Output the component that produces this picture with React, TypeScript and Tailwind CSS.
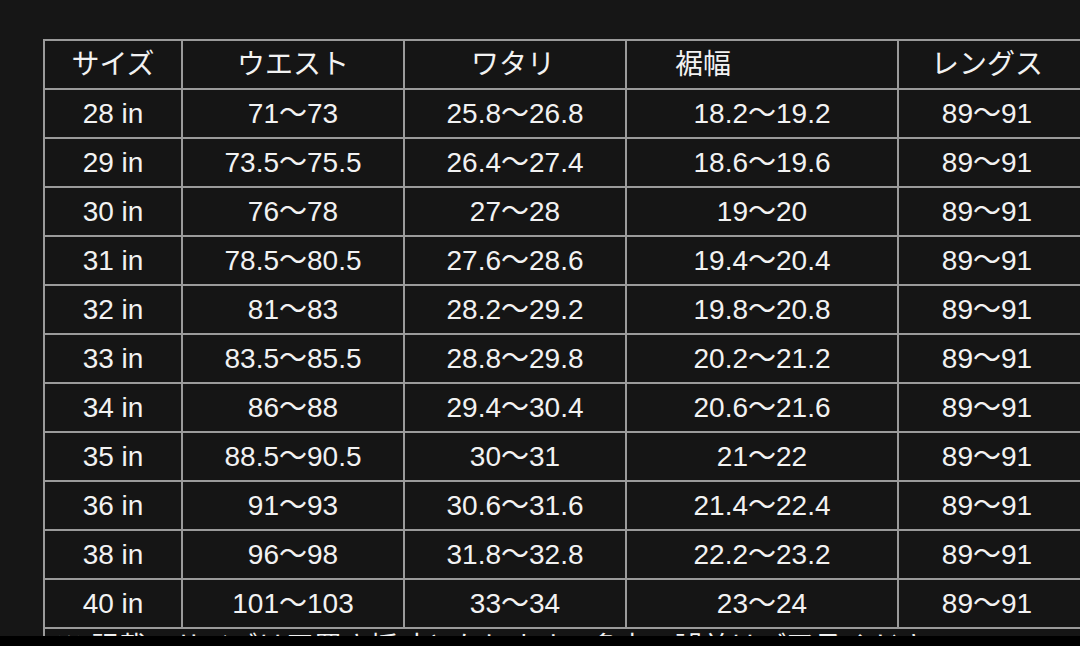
const headers: { label: string; className: string }[] = [
  { label: "サイズ", className: "justify-center" },
  { label: "ウエスト", className: "justify-center" },
  { label: "ワタリ", className: "justify-center pr-[4px]" },
  { label: "裾幅", className: "justify-start pl-[48px]" },
  { label: "レングス", className: "justify-center pr-[14px]" },
];

const rows: string[][] = [
  ["28 in", "71〜73", "25.8〜26.8", "18.2〜19.2", "89〜91"],
  ["29 in", "73.5〜75.5", "26.4〜27.4", "18.6〜19.6", "89〜91"],
  ["30 in", "76〜78", "27〜28", "19〜20", "89〜91"],
  ["31 in", "78.5〜80.5", "27.6〜28.6", "19.4〜20.4", "89〜91"],
  ["32 in", "81〜83", "28.2〜29.2", "19.8〜20.8", "89〜91"],
  ["33 in", "83.5〜85.5", "28.8〜29.8", "20.2〜21.2", "89〜91"],
  ["34 in", "86〜88", "29.4〜30.4", "20.6〜21.6", "89〜91"],
  ["35 in", "88.5〜90.5", "30〜31", "21〜22", "89〜91"],
  ["36 in", "91〜93", "30.6〜31.6", "21.4〜22.4", "89〜91"],
  ["38 in", "96〜98", "31.8〜32.8", "22.2〜23.2", "89〜91"],
  ["40 in", "101〜103", "33〜34", "23〜24", "89〜91"],
];

export default function App() {
  return (
    <div
      className="w-[1080px] h-[646px] overflow-hidden bg-black flex flex-col"
      style={{ fontFamily: '"Liberation Sans", "Noto Sans CJK JP", sans-serif' }}
    >
      <div className="h-[636px] overflow-hidden bg-[#161616] pl-[43px] pt-[39px]">
        <div className="grid w-[1060px] grid-cols-[136px_220px_220px_270px_190px] auto-rows-[47px] gap-[2px] bg-[#9a9a9a] p-[2px] text-[28px] leading-none text-[#f2f2f2]">
          {headers.map((h) => (
            <div key={h.label} className={`flex items-center bg-[#151515] ${h.className}`}>
              {h.label}
            </div>
          ))}
          {rows.map((row) =>
            row.map((cell, i) => (
              <div
                key={row[0] + i}
                className={`flex items-center justify-center bg-[#151515] ${i === 4 ? "pr-[14px]" : ""}`}
              >
                {cell}
              </div>
            ))
          )}
          <div className="col-span-5 bg-[#151515] pl-[10px] pt-[5px] whitespace-nowrap">
            ※ 記載のサイズは平置き採寸となります。多少の誤差はご了承ください。
          </div>
        </div>
      </div>
      <div className="h-[10px] bg-black" />
    </div>
  );
}
